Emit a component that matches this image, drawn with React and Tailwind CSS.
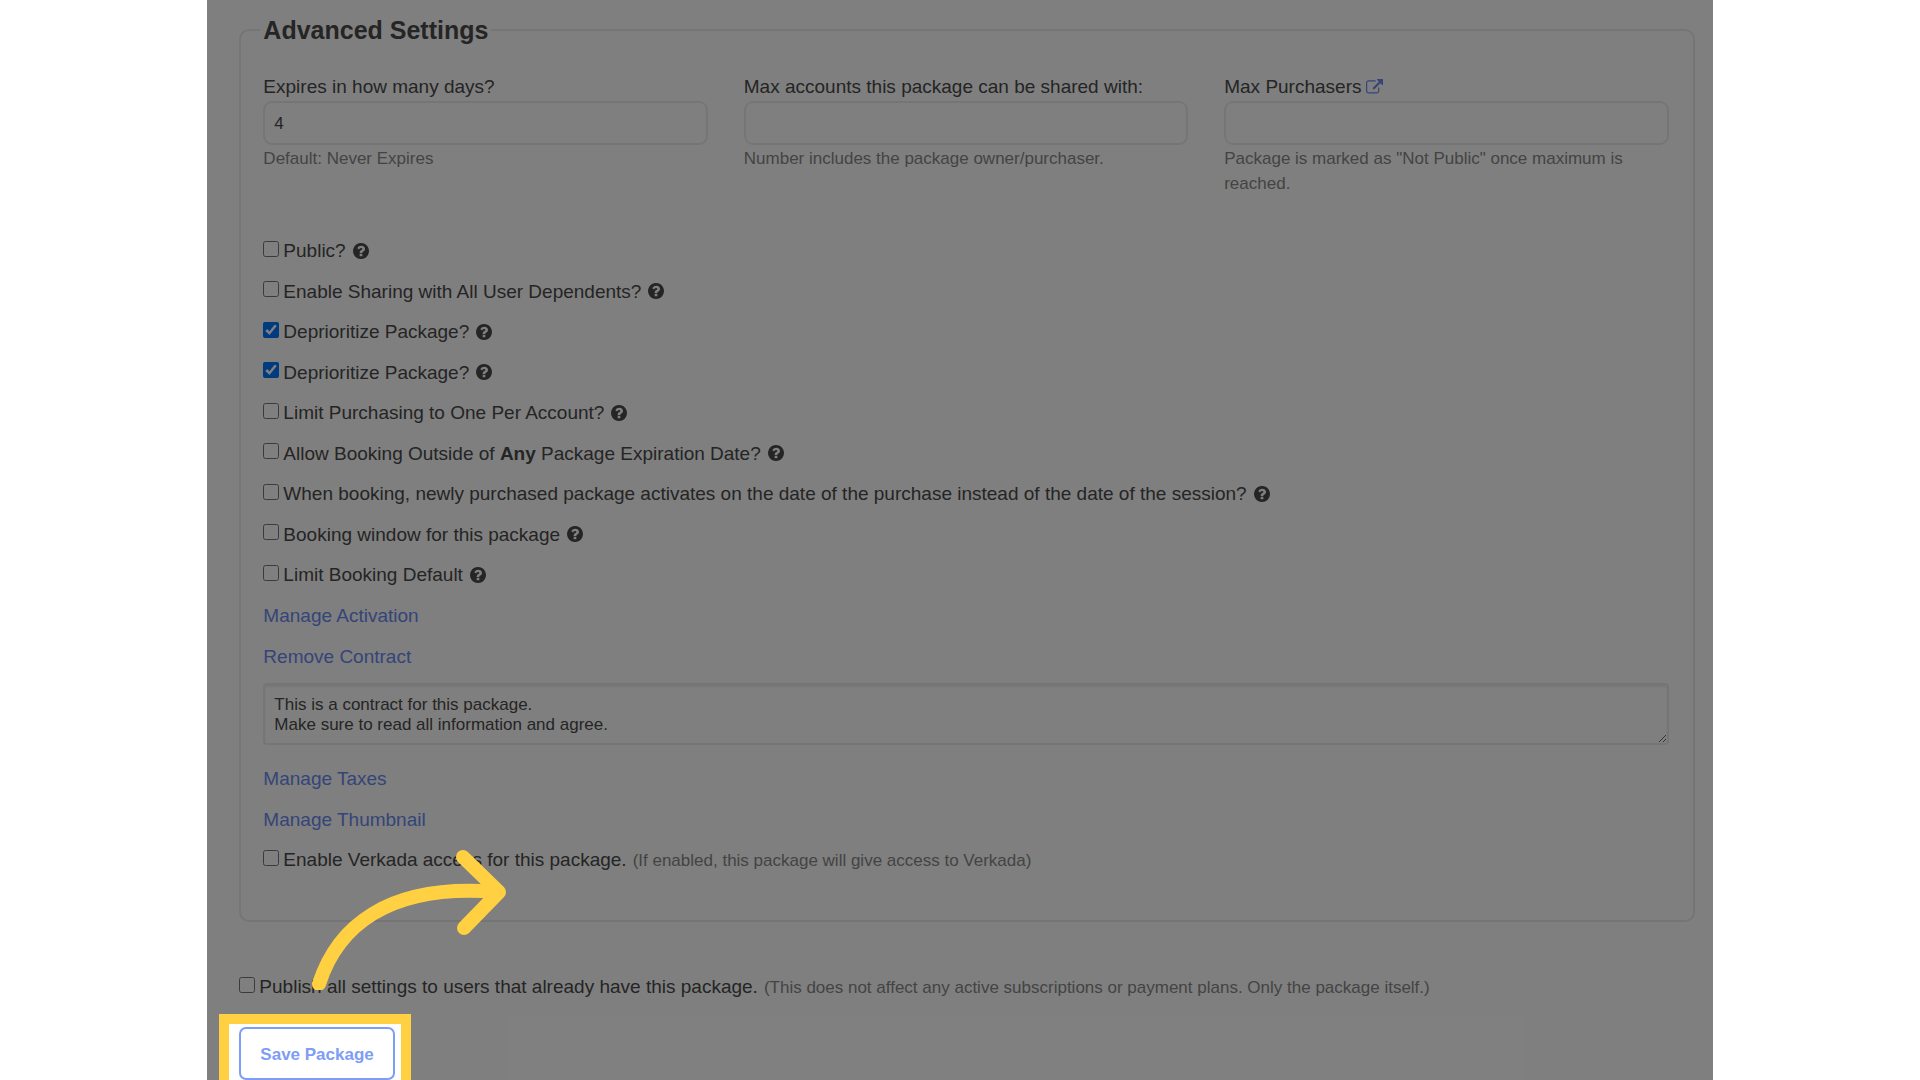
import { useId } from 'react'

function HelpIcon() {
  return (
    <svg viewBox="128 128 1536 1536" className="h-4 w-4 shrink-0" fill="#4a4a4a" aria-hidden="true">
      <path d="M1024 1376v-192q0-14-9-23t-23-9h-192q-14 0-23 9t-9 23v192q0 14 9 23t23 9h192q14 0 23-9t9-23zm256-672q0-88-55.5-163t-138.5-116-170-41q-243 0-371 213-15 24 8 42l132 100q7 6 19 6 16 0 25-12 53-68 86-92 34-24 86-24 48 0 85.5 26t37.5 59q0 38-20 61t-68 45q-63 28-115.5 86.5t-52.5 125.5v36q0 14 9 23t23 9h192q14 0 23-9t9-23q0-19 21.5-49.5t54.5-49.5q32-18 49-28.5t46-35 44.5-48 28-60.5 12.5-81zm384 192q0 209-103 385.5t-279.5 279.5-385.5 103-385.5-103-279.5-279.5-103-385.5 103-385.5 279.5-279.5 385.5-103 385.5 103 279.5 279.5 103 385.5z" />
    </svg>
  )
}

function ExternalLinkIcon() {
  return (
    <svg viewBox="0 0 1792 1792" className="h-[17px] w-[17px]" fill="currentColor" aria-hidden="true">
      <path d="M1408 928v320q0 119-84.5 203.5t-203.5 84.5h-832q-119 0-203.5-84.5t-84.5-203.5v-832q0-119 84.5-203.5t203.5-84.5h704q14 0 23 9t9 23v64q0 14-9 23t-23 9h-704q-66 0-113 47t-47 113v832q0 66 47 113t113 47h832q66 0 113-47t47-113v-320q0-14 9-23t23-9h64q14 0 23 9t9 23zm384-864v512q0 26-19 45t-45 19-45-19l-176-176-652 652q-10 10-23 10t-23-10l-114-114q-10-10-10-23t10-23l652-652-176-176q-19-19-19-45t19-45 45-19h512q26 0 45 19t19 45z" />
    </svg>
  )
}

function Field({ label, link, value, help }) {
  const id = useId()
  return (
    <div>
      <div className="flex items-center gap-[5px] leading-7">
        <label htmlFor={id}>{label}</label>
        {link && (
          <a href="#purchasers" aria-label={link} className="text-[#6a8af0]">
            <ExternalLinkIcon />
          </a>
        )}
      </div>
      <input
        id={id}
        type="text"
        defaultValue={value}
        className="block h-11 w-full rounded-[9px] border-2 border-[#ebebeb] bg-white px-[9px] pt-[2px] text-[17px]"
      />
      <p className="mt-px text-[17px] leading-[25px] text-[#888]">{help}</p>
    </div>
  )
}

function CheckRow({ children, note, checked, help }) {
  const id = useId()
  return (
    <div className="flex h-10 items-center odd:h-[41px]">
      <input id={id} type="checkbox" defaultChecked={checked} className="mb-1 h-4 w-4 shrink-0" />
      <label htmlFor={id} className="ml-1 pt-[2px]">
        {children}
      </label>
      {note && <span className="ml-[6px] pt-[2px] text-[17px] text-[#888]">{note}</span>}
      {help && (
        <span className="ml-[7px]">
          <HelpIcon />
        </span>
      )}
    </div>
  )
}

function LinkRow({ href, children }) {
  return (
    <div className="flex h-10 items-center pt-[2px] odd:h-[41px]">
      <a href={href} className="text-[#6a8af0]">
        {children}
      </a>
    </div>
  )
}

const options = [
  { label: 'Public?' },
  { label: 'Enable Sharing with All User Dependents?' },
  { label: 'Deprioritize Package?', checked: true },
  { label: 'Deprioritize Package?', checked: true },
  { label: 'Limit Purchasing to One Per Account?' },
  {
    label: (
      <>
        Allow Booking Outside of <strong>Any</strong> Package Expiration Date?
      </>
    ),
  },
  { label: 'When booking, newly purchased package activates on the date of the purchase instead of the date of the session?' },
  { label: 'Booking window for this package' },
  { label: 'Limit Booking Default' },
]

const contract = 'This is a contract for this package.\nMake sure to read all information and agree.'

export default function App() {
  return (
    <div className="h-screen overflow-hidden bg-white font-['Liberation_Sans',Arial,sans-serif] text-[19px] text-[#4a4a4a]">
      <main className="relative mx-auto h-full w-[78.4%] overflow-hidden bg-white pt-3 pr-[18px] pl-8">
        <fieldset className="rounded-[10px] border-2 border-[#ebebeb] pr-6 pb-10 pl-[22px]">
          <legend className="-mx-[3px] px-[3px] text-[25px] leading-9 font-bold">Advanced Settings</legend>

          <div className="grid grid-cols-3 gap-9 pt-[25px]">
            <Field label="Expires in how many days?" value="4" help="Default: Never Expires" />
            <Field
              label="Max accounts this package can be shared with:"
              help="Number includes the package owner/purchaser."
            />
            <Field
              label="Max Purchasers"
              link="View purchasers"
              help={'Package is marked as "Not Public" once maximum is reached.'}
            />
          </div>

          <div className="mt-[34px]">
            {options.map((option, i) => (
              <CheckRow key={i} checked={option.checked} help>
                {option.label}
              </CheckRow>
            ))}
          </div>

          <div>
            <LinkRow href="#activation">Manage Activation</LinkRow>
            <LinkRow href="#contract">Remove Contract</LinkRow>
          </div>

          <textarea
            aria-label="Contract"
            defaultValue={contract}
            className="mt-[7px] block h-[62px] w-full resize overflow-hidden rounded-[4px] border-2 border-[#ebebeb] bg-white px-[9px] pt-[10px] text-[17px] leading-5 shadow-[inset_0_2px_2px_#00000012]"
          />

          <div className="mt-[13px]">
            <LinkRow href="#taxes">Manage Taxes</LinkRow>
            <LinkRow href="#thumbnail">Manage Thumbnail</LinkRow>
            <CheckRow note="(If enabled, this package will give access to Verkada)">
              Enable Verkada access for this package.
            </CheckRow>
          </div>
        </fieldset>

        <div className="mt-11">
          <CheckRow note="(This does not affect any active subscriptions or payment plans. Only the package itself.)">
            Publish all settings to users that already have this package.
          </CheckRow>
        </div>

        {/* dims everything except the highlighted button */}
        <div className="pointer-events-none absolute inset-0 bg-black/50" />

        <div className="relative z-10 mt-[7px] -ml-5 w-fit border-10 border-[#ffd042] bg-white pt-[3px] pr-[6px] pl-[10px]">
          <button
            type="button"
            className="block h-[53px] rounded-[7px] border-2 border-[#7e9df7] bg-white px-[19px] pt-[2px] text-[17px] font-bold text-[#7e9df7]"
          >
            Save Package
          </button>
        </div>

        <svg
          viewBox="0 0 208 150"
          className="pointer-events-none absolute top-[840px] left-[103px] z-20 w-[208px]"
          fill="none"
          stroke="#ffd042"
          strokeWidth="14"
          strokeLinecap="round"
          strokeLinejoin="round"
          aria-hidden="true"
        >
          <path d="M9 144C27 88 76 43 187 52" />
          <path d="M153 17l36 35-35 36" />
        </svg>
      </main>
    </div>
  )
}
